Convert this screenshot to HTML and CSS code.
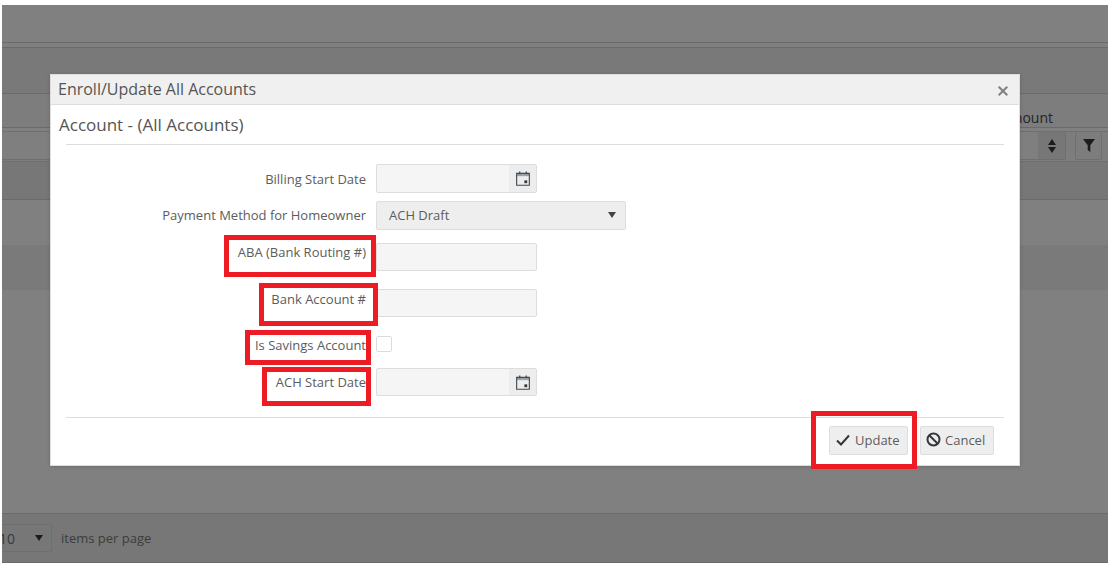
FILE: index.html
```html
<!DOCTYPE html>
<html lang="en">
<head>
<meta charset="utf-8">
<title>Enroll/Update All Accounts</title>
<link rel="stylesheet" href="styles.css">
</head>
<body>
<div class="page">
  <div class="band b-top"></div>
  <div class="band b-nav"></div>
  <div class="band b-head"><span class="col-title">Amount</span></div>
  <div class="band b-filter">
    <div class="filter-input"><span class="sort-box"><svg width="10" height="16" viewBox="0 0 10 16"><path d="M5 1l4 6H1zM5 15L1 9h8z" fill="#1c1c1c"/></svg></span></div>
    <div class="filter-btn"><svg width="12" height="13" viewBox="0 0 12 13"><path d="M0 0h12L7.300 6.200V13L4.700 11V6.200z" fill="#1c1c1c"/></svg></div>
  </div>
  <div class="band b-dark"></div>
  <div class="band b-row"></div>
  <div class="band b-alt"></div>
  <div class="band b-empty"></div>
  <div class="band b-pager">
    <div class="page-size"><span class="size-value">10</span><i class="caret dark"></i></div>
    <span class="pager-text">items per page</span>
  </div>
</div>

<section class="modal">
  <header class="modal-head">
    <h1>Enroll/Update All Accounts</h1>
    <svg class="close" width="10" height="10" viewBox="0 0 10 10"><path d="M.7.7l8.600 8.600M9.300.7L.7 9.300" stroke="#808080" stroke-width="2" fill="none"/></svg>
  </header>
  <h2>Account - (All Accounts)</h2>
  <form class="form">
    <div class="row r1">
      <label>Billing Start Date</label>
      <div class="input date"><span class="addon"><svg class="cal" width="14" height="15" viewBox="0 0 15 16"><path d="M.7 2.500h13.600v12.800H.7z" fill="none" stroke="#3f4a52" stroke-width="1.200"/><path d="M.7 2.500h13.600v3H.7z" fill="#3f4a52" opacity=".45"/><path d="M4 .5v3M11 .5v3" stroke="#3f4a52" stroke-width="1.400"/><path d="M9 10h3v3H9z" fill="#333"/></svg></span></div>
    </div>
    <div class="row r2">
      <label>Payment Method for Homeowner</label>
      <div class="select"><span>ACH Draft</span><i class="caret"></i></div>
    </div>
    <div class="row r3">
      <label class="high">ABA (Bank Routing #)</label>
      <div class="input text"></div>
    </div>
    <div class="row r4">
      <label class="high">Bank Account #</label>
      <div class="input text"></div>
    </div>
    <div class="row r5">
      <label>Is Savings Account</label>
      <div class="check"></div>
    </div>
    <div class="row r6">
      <label>ACH Start Date</label>
      <div class="input date"><span class="addon"><svg class="cal" width="14" height="15" viewBox="0 0 15 16"><path d="M.7 2.500h13.600v12.800H.7z" fill="none" stroke="#3f4a52" stroke-width="1.200"/><path d="M.7 2.500h13.600v3H.7z" fill="#3f4a52" opacity=".45"/><path d="M4 .5v3M11 .5v3" stroke="#3f4a52" stroke-width="1.400"/><path d="M9 10h3v3H9z" fill="#333"/></svg></span></div>
    </div>
  </form>
  <footer class="modal-foot">
    <button type="button" class="btn btn-update"><svg width="14" height="12" viewBox="0 0 14 12"><path d="M1 6.500l4 4L13 1.500" fill="none" stroke="#33363a" stroke-width="2"/></svg>Update</button>
    <button type="button" class="btn btn-cancel"><svg width="15" height="15" viewBox="0 0 15 15"><circle cx="7.500" cy="7.500" r="6" fill="none" stroke="#33363a" stroke-width="2"/><path d="M3.500 3.500l8 8" stroke="#33363a" stroke-width="2"/></svg>Cancel</button>
  </footer>
</section>

<div class="mark m1"></div>
<div class="mark m2"></div>
<div class="mark m3"></div>
<div class="mark m4"></div>
<div class="mark m5"></div>
</body>
</html>
```

FILE: styles.css
```css
* { box-sizing: border-box; }
html, body { margin: 0; height: 100%; background: #fff; overflow: hidden; }
body { font-family: "Open Sans", sans-serif; font-size: 13px; color: #5c5c5c; }

.page { margin: 5px 0 0 2px; height: 558px; display: flex; flex-direction: column; background: #808080; }
.band { flex: none; border-bottom: 1px solid #6a6a6a; }
.b-top { height: 38px; background: #808080; }
.b-nav { height: 47px; margin-top: 4px; background: #797979; border-top: 1px solid #6a6a6a; }
.b-head { height: 34px; background: #7d7d7d; position: relative; }
.col-title { position: absolute; left: 970px; top: 14px; font-size: 14px; color: #252525; width: 81px; text-align: right; }
.b-filter { height: 31px; margin-top: 3px; border-top: 1px solid #6f6f6f; background: #7d7d7d; display: flex; padding: 0 6px 0 0; gap: 9px; align-items: flex-start; border-bottom-color: #6f6f6f; }
.filter-input { flex: 1; height: 28px; border: 1px solid #6f6f6f; border-width: 0 1px 1px 0; border-radius: 0 0 2px 0; display: flex; justify-content: flex-end; background: #7f7f7f; }
.sort-box { width: 27px; background: #777; display: flex; align-items: center; justify-content: center; }
.filter-btn { flex: none; width: 27px; height: 28px; border: 1px solid #6f6f6f; border-top: 0; border-radius: 2px; display: flex; align-items: center; justify-content: center; }
.b-dark { height: 38px; background: #777; }
.b-row { height: 45px; background: #808080; border-bottom: 0; }
.b-alt { height: 45px; background: #7a7a7a; border-bottom: 0; }
.b-empty { height: 224px; background: #808080; }
.b-pager { flex: 1; background: #777; border-bottom: 1px solid #6a6a6a; display: flex; align-items: center; gap: 9px; }
.page-size { width: 50px; height: 28px; border: 1px solid #6f6f6f; border-left: 0; border-radius: 0 2px 2px 0; display: flex; align-items: center; justify-content: space-between; padding-right: 8px; color: #3a3a3a; font-size: 14px; overflow: hidden; }
.size-value { margin-left: -3px; }
.pager-text { color: #3c3c3c; font-size: 13px; }
.caret { flex: none; width: 0; height: 0; border-left: 4px solid transparent; border-right: 4px solid transparent; border-top: 6px solid #444; }
.caret.dark { border-top-color: #1c1c1c; }

.modal { position: absolute; left: 50px; top: 74px; width: 970px; height: 392px; background: #fff; border: 1px solid #ddd; display: flex; flex-direction: column; box-shadow: 0 1px 4px rgba(0,0,0,.15); }
.modal-head { height: 30px; flex: none; background: #f0f0f0; border-bottom: 1px solid #ddd; display: flex; align-items: center; justify-content: space-between; padding: 0 11px 0 7px; }
.modal-head h1 { margin: 0 0 2px; font-size: 16px; font-weight: 400; color: #555; }
.close { margin-top: 3px; }
.modal h2 { margin: 9px 15px 0 8px; padding: 0 0 8px; font-size: 17px; line-height: 22px; font-weight: 400; color: #555; }
.form { margin: 0 15px; border-top: 1px solid #ddd; padding-top: 19px; height: 274px; border-bottom: 1px solid #ddd; }
.row { display: flex; align-items: center; gap: 10px; }
.row label { width: 285px; margin-left: 15px; text-align: right; font-size: 13px; color: #5c5c5c; }
.row .high { align-self: flex-start; }
.r2 { margin-top: 8px; }
.r2 label { padding-bottom: 2px; }
.r3 { margin-top: 13px; }
.r4 { margin-top: 18px; }
.r4 label { padding-top: 1px; }
.r5 { margin-top: 19px; align-items: flex-start; }
.r6 { margin-top: 14px; }
.r6 .date { height: 28px; }
.r6 label { padding-bottom: 1px; }
.input { width: 161px; border: 1px solid #ddd; border-radius: 2px; background: #f5f5f5; display: flex; justify-content: flex-end; }
.date { height: 29px; }
.text { height: 28px; }
.addon { width: 27px; background: #ededed; display: flex; align-items: center; justify-content: center; }
.select { width: 250px; height: 29px; border: 1px solid #ddd; border-radius: 2px; background: #eee; display: flex; align-items: center; justify-content: space-between; padding: 0 9px 2px 12px; color: #5c5c5c; }
.check { width: 16px; height: 16px; border: 1px solid #ddd; border-radius: 2px; background: #fff; }
.modal-foot { display: flex; justify-content: flex-end; gap: 12px; margin: 8px 25px 0 0; }
.btn { height: 29px; padding: 0 0 2px; display: flex; align-items: center; gap: 5px; border: 1px solid #ddd; border-radius: 2px; background: #eee; font: 13px "Open Sans", sans-serif; color: #5c5c5c; }
.btn svg { flex: none; }
.btn-update { width: 79px; padding-left: 6px; }
.btn-cancel { width: 74px; padding-left: 5px; gap: 4px; }

.mark { position: absolute; border: 5px solid #ed1c24; }
.m1 { left: 224px; top: 235px; width: 152px; height: 42px; }
.m2 { left: 259px; top: 283px; width: 119px; height: 43px; }
.m3 { left: 245px; top: 330px; width: 126px; height: 35px; }
.m4 { left: 262px; top: 367px; width: 109px; height: 39px; }
.m5 { left: 811px; top: 411px; width: 106px; height: 58px; }
```
